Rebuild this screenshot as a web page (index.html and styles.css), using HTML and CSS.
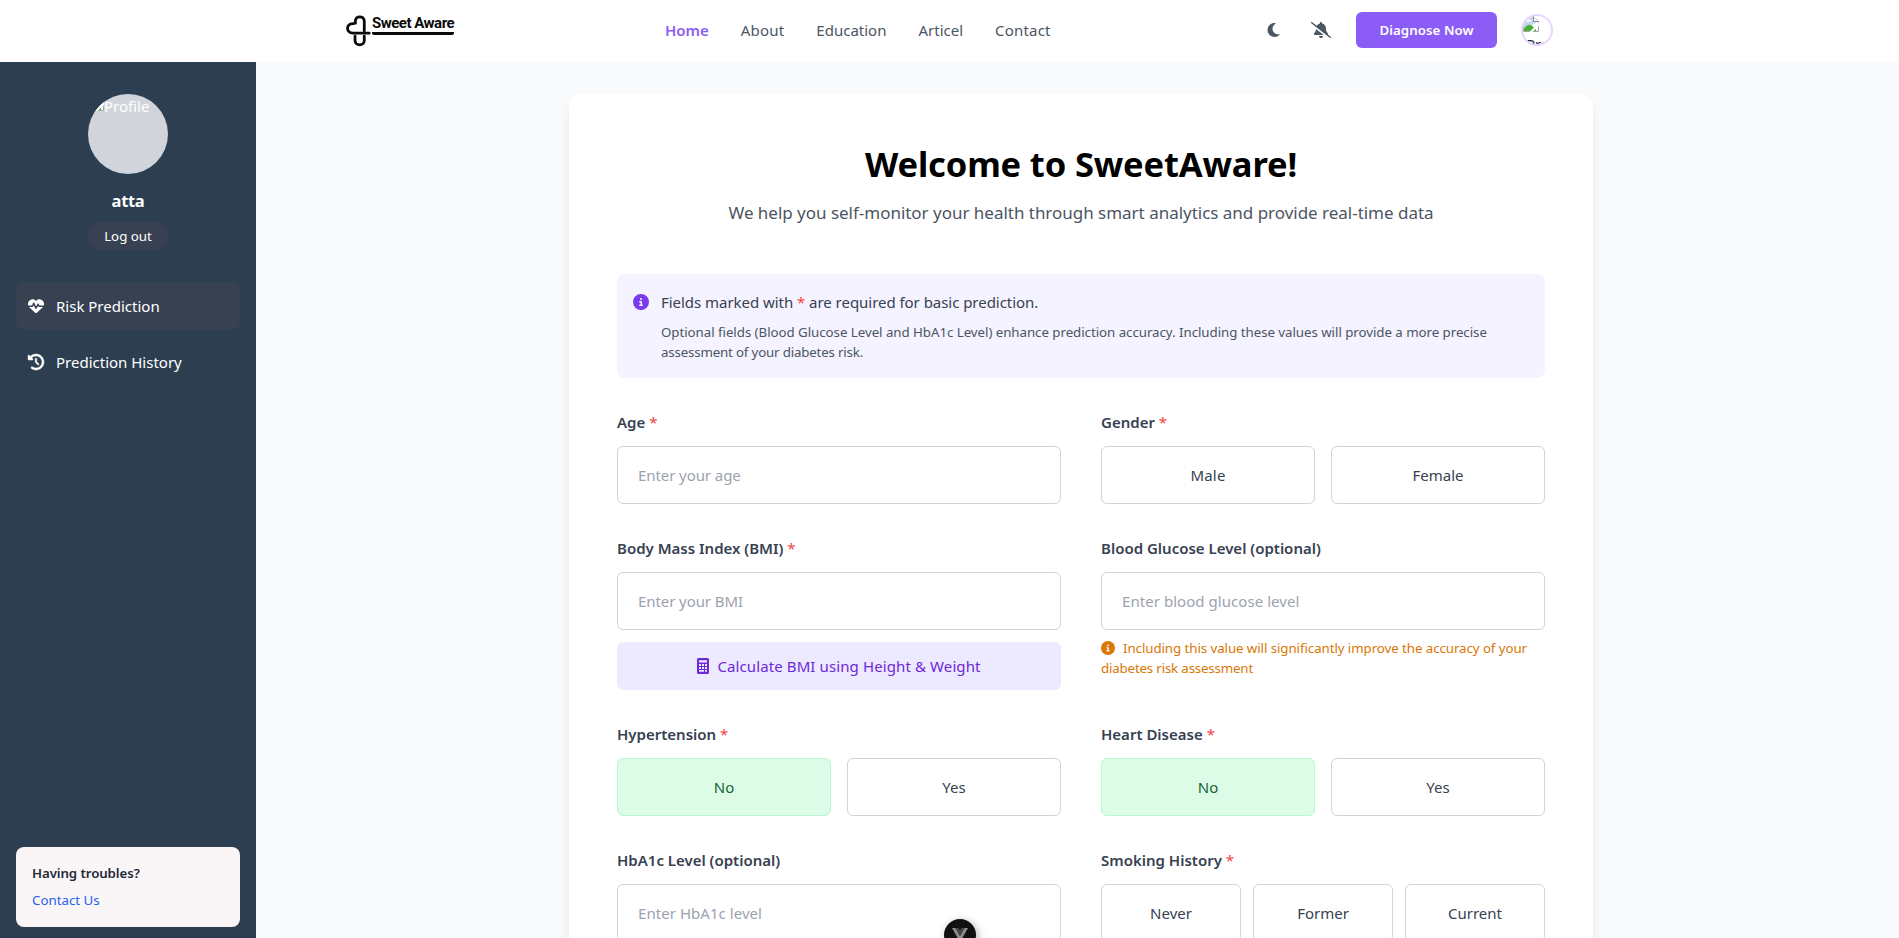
FILE: index.html
```html
<!DOCTYPE html>
<html lang="en">
<head>
<meta charset="utf-8">
<title>Sweet Aware</title>
<link rel="stylesheet" href="styles.css">
</head>
<body>
<svg class="defs" aria-hidden="true">
  <symbol id="info" viewBox="0 0 512 512"><path d="M256 512A256 256 0 1 0 256 0a256 256 0 1 0 0 512zM216 336h24V272H216c-13.3 0-24-10.7-24-24s10.7-24 24-24h48c13.3 0 24 10.7 24 24v88h8c13.3 0 24 10.7 24 24s-10.7 24-24 24H216c-13.3 0-24-10.7-24-24s10.7-24 24-24zm40-208a32 32 0 1 1 0 64 32 32 0 1 1 0-64z"/></symbol>
  <symbol id="broken" viewBox="0 0 16 16">
    <path d="M.5.5h10l5 5v10H.5z" fill="#fff" stroke="#a3a3a3"/>
    <path d="M1 1h9.5v4.500h4.500L1 14z" fill="#c2d5f2"/>
    <path d="M3 5.500q0-1.500 1.500-1.500 1-1.500 2.500 0 1.500 0 1.500 1.500z" fill="#fff"/>
    <path d="M1 15v-2.500Q5 7 8.500 9.500L13 13v2z" fill="#4caf3a"/>
    <path d="M16 6.500 6.500 16h3L16 10z" fill="#fff"/>
    <path d="M10.500.5v5h5" fill="#fff" stroke="#8b8b8b"/>
  </symbol>
</svg>

<header class="navbar">
  <div class="logo">
    <svg class="logo-mark" viewBox="43 40 81 100" width="27" height="33" fill="none" stroke="#0a0a0a" stroke-width="8.500" stroke-linecap="round">
      <path d="M116 98H66c-20-1-22-28 0-29 4 0 7 0 8 2V62c0-18 27-18 27 0v29"/>
      <path d="M73 107v13c0 18 28 18 28 0v-13"/>
    </svg>
    <span class="logo-name">Sweet Aware</span>
  </div>
  <nav class="links">
    <a class="link link-active">Home</a>
    <a class="link about">About</a>
    <a class="link">Education</a>
    <a class="link">Articel</a>
    <a class="link contact">Contact</a>
  </nav>
  <div class="actions">
    <svg class="moon" viewBox="0 0 384 512" width="13" height="16"><path d="M223.500 32C100 32 0 132.300 0 256S100 480 223.500 480c60.600 0 115.500-24.200 155.800-63.400c5-4.900 6.300-12.500 3.100-18.700s-10.100-9.700-17-8.500c-9.800 1.700-19.800 2.600-30.100 2.600c-96.900 0-175.500-78.800-175.500-176c0-65.800 36-123.100 89.300-153.300c6.100-3.500 9.200-10.500 7.700-17.300s-7.300-11.900-14.300-12.500c-6.300-.5-12.600-.8-19-.8z"/></svg>
    <svg class="bell" viewBox="0 0 640 512" width="20" height="16"><path d="M38.800 5.100C28.400-3.100 13.300-1.200 5.100 9.200S-1.200 34.700 9.200 42.900l592 464c10.400 8.200 25.500 6.300 33.700-4.100s6.300-25.500-4.100-33.700l-90.200-70.700c.2-.4 .4-.9 .6-1.300c5.200-11.500 3.100-25-5.300-34.400l-7.400-8.300C497.300 319.200 480 273.900 480 226.800V208c0-77.400-55-142-128-156.800V32c0-17.700-14.300-32-32-32s-32 14.300-32 32V51.200c-42.600 8.600-79 34.200-102 69.300L38.800 5.100zM406.200 416L160 222.100v4.800c0 47-17.300 92.400-48.500 127.600l-7.400 8.300c-8.400 9.400-10.400 22.900-5.300 34.400S115.400 416 128 416H406.200zm-40.900 77.300c12-12 18.700-28.300 18.700-45.300H320 256c0 17 6.700 33.300 18.700 45.300s28.300 18.700 45.300 18.700s33.300-6.700 45.300-18.700z"/></svg>
    <a class="diagnose">Diagnose Now</a>
    <div class="avatar"><svg width="16" height="16"><use href="#broken"/></svg><span class="avatar-alt">Profile</span></div>
  </div>
</header>

<div class="layout">
  <aside class="sidebar">
    <div class="photo"><svg class="photo-icon" width="16" height="16"><use href="#broken"/></svg><span>Profile</span></div>
    <div class="user">atta</div>
    <a class="logout">Log out</a>
    <nav class="menu">
      <a class="item item-active"><svg viewBox="0 0 512 512" width="16" height="16"><path d="M228.300 469.100L47.600 300.400c-4.200-3.900-8.200-8.100-11.900-12.400h87c22.600 0 43-13.600 51.700-34.500l10.500-25.200 49.300 109.500c3.800 8.500 12.100 14 21.400 14.100s17.800-5 22-13.300L320 253.700l1.700 3.400c9.500 19 28.900 31 50.100 31H476.300c-3.700 4.300-7.700 8.500-11.900 12.400L283.700 469.100c-7.500 7-17.400 10.900-27.700 10.900s-20.200-3.900-27.700-10.900zM503.700 240h-132c-3 0-5.800-1.700-7.200-4.400l-23.200-46.300c-4.100-8.100-12.400-13.300-21.500-13.300s-17.400 5.100-21.500 13.300l-41.400 82.800L205.900 158.200c-3.900-8.700-12.700-14.300-22.200-14.100s-18.100 5.900-21.800 14.800l-31.800 76.300c-1.200 3-4.200 4.900-7.400 4.900H16c-2.600 0-5 .4-7.300 1.100C3 225.200 0 208.200 0 190.900v-5.800c0-69.900 50.500-129.500 119.400-141C165 36.500 211.400 51.400 244 84l12 12 12-12c32.600-32.600 79-47.500 124.600-39.900C461.500 55.600 512 115.200 512 185.100v5.800c0 16.900-2.800 33.500-8.300 49.100z"/></svg>Risk Prediction</a>
      <a class="item"><svg class="history" viewBox="0 0 512 512" width="16" height="16"><path d="M75 75L41 41C25.900 25.900 0 36.600 0 57.900V168c0 13.300 10.700 24 24 24H134.100c21.400 0 32.100-25.900 17-41l-30.800-30.800C155 85.500 203 64 256 64c106 0 192 86 192 192s-86 192-192 192c-40.800 0-78.600-12.700-109.700-34.400c-14.500-10.100-34.400-6.600-44.600 7.900s-6.600 34.400 7.900 44.600C151.200 495 201.700 512 256 512c141.400 0 256-114.600 256-256S397.400 0 256 0C185.300 0 121.300 28.700 75 75zm181 53c-13.300 0-24 10.700-24 24V256c0 6.400 2.500 12.500 7 17l72 72c9.400 9.400 24.600 9.400 33.900 0s9.400-24.600 0-33.900l-65-65V152c0-13.300-10.700-24-24-24z"/></svg>Prediction History</a>
    </nav>
    <div class="help">
      <div class="help-title">Having troubles?</div>
      <a class="help-link">Contact Us</a>
    </div>
  </aside>

  <main class="main">
    <section class="card">
      <h1 class="title">Welcome to SweetAware!</h1>
      <p class="subtitle">We help you self-monitor your health through smart analytics and provide real-time data</p>

      <div class="notice">
        <svg class="notice-icon" width="16" height="16"><use href="#info"/></svg>
        <div>
          <p class="notice-lead">Fields marked with <span class="req">*</span> are required for basic prediction.</p>
          <p class="notice-text">Optional fields (Blood Glucose Level and HbA1c Level) enhance prediction accuracy. Including these values will provide a more precise<br><span class="tight">assessment of your diabetes risk.</span></p>
        </div>
      </div>

      <form class="form">
        <div class="field">
          <label class="label">Age <span class="req">*</span></label>
          <input class="input" placeholder="Enter your age">
        </div>
        <div class="field">
          <label class="label">Gender <span class="req">*</span></label>
          <div class="options"><button type="button" class="option male">Male</button><button type="button" class="option">Female</button></div>
        </div>
        <div class="field">
          <label class="label">Body Mass Index (BMI) <span class="req">*</span></label>
          <input class="input" placeholder="Enter your BMI">
          <button type="button" class="calc">
            <svg width="12" height="16" viewBox="0 0 12 16"><path fill-rule="evenodd" d="M1.500 0h9A1.500 1.500 0 0 1 12 1.500v13a1.500 1.500 0 0 1-1.500 1.500h-9A1.500 1.500 0 0 1 0 14.500v-13A1.500 1.500 0 0 1 1.500 0zM2 2.200v2.300h8V2.200zM2 6v2h2V6zM5 6v2h2V6zM8 6v2h2V6zM2 9v2h2V9zM5 9v2h2V9zM8 9v2h2V9zM2 12v1.800h5V12zM8 12v1.800h2V12z"/></svg>
            Calculate BMI using Height &amp; Weight
          </button>
        </div>
        <div class="field">
          <label class="label">Blood Glucose Level (optional)</label>
          <input class="input wide" placeholder="Enter blood glucose level">
          <p class="hint"><svg class="hint-icon" width="14" height="14"><use href="#info"/></svg>Including this value will significantly improve the accuracy of your<br><span class="tight">diabetes risk assessment</span></p>
        </div>
        <div class="field">
          <label class="label">Hypertension <span class="req">*</span></label>
          <div class="options"><button type="button" class="option option-on">No</button><button type="button" class="option">Yes</button></div>
        </div>
        <div class="field">
          <label class="label">Heart Disease <span class="req">*</span></label>
          <div class="options"><button type="button" class="option option-on">No</button><button type="button" class="option">Yes</button></div>
        </div>
        <div class="field">
          <label class="label">HbA1c Level (optional)</label>
          <input class="input wide" placeholder="Enter HbA1c level">
        </div>
        <div class="field">
          <label class="label">Smoking History <span class="req">*</span></label>
          <div class="options options-3"><button type="button" class="option">Never</button><button type="button" class="option">Former</button><button type="button" class="option">Current</button></div>
        </div>
      </form>
    </section>
  </main>
</div>

<div class="devtools">
  <svg width="16" height="14" viewBox="0 0 16 14"><path d="M0 0h3.500L8 8l4.500-8H16L8 14z" fill="#8d8d8d"/><path d="M3.500 0h3L8 2.600 9.500 0h3L8 8z" fill="#484848"/></svg>
</div>
</body>
</html>
```

FILE: styles.css
```css
* { box-sizing: border-box; margin: 0; padding: 0; }

body {
  height: 938px;
  overflow: hidden;
  display: flex;
  flex-direction: column;
  background: #f9fafc;
  color: #000;
  font: 15px/24px "Noto Sans", "Open Sans", sans-serif;
  letter-spacing: 0;
}

svg { display: block; flex: none; fill: currentColor; }
.defs { position: absolute; width: 0; height: 0; }
button, input { font: inherit; letter-spacing: inherit; }

/* Top bar */
.navbar {
  flex: none;
  height: 62px;
  padding: 0 346px 2px 345px;
  display: flex;
  align-items: center;
  background: #fff;
}

.logo { width: 320px; display: flex; align-items: flex-start; }
.logo-mark { fill: none; }
.logo-name {
  margin-top: 1px;
  border-bottom: 3px solid #0a0a0a;
  border-radius: 0 0 2px 2px;
  color: #0a0a0a;
  font: 700 15px/17px Roboto, sans-serif;
  letter-spacing: -0.5px;
}

.links { display: flex; gap: 32px; color: #4b5563; }
.link-active { color: #8b5cf6; font-weight: 600; }
.about, .contact { letter-spacing: 0.2px; }

.actions { margin-left: auto; display: flex; align-items: center; color: #4b5563; }
.moon { margin-right: 31px; }
.bell { margin-right: 25px; }
.diagnose {
  width: 141px;
  height: 36px;
  margin-right: 24px;
  border-radius: 6px;
  background: #8b5cf6;
  color: #fff;
  font-size: 13.3px;
  font-weight: 600;
  line-height: 36px;
  text-align: center;
  letter-spacing: 0.05px;
}
.avatar {
  width: 32px;
  height: 32px;
  border: 2px solid #e9d5ff;
  border-radius: 50%;
  overflow: hidden;
}
.avatar-alt { display: block; margin-left: 3px; color: #1f2937; }

/* Sidebar */
.layout { flex: 1; min-height: 0; display: flex; }
.sidebar {
  flex: none;
  width: 256px;
  padding: 32px 16px 11px;
  display: flex;
  flex-direction: column;
  align-items: center;
  background: #2d3e50;
  color: #fff;
}
.photo {
  width: 80px;
  height: 80px;
  display: flex;
  border-radius: 50%;
  background: #d1d5db;
  overflow: hidden;
}
.photo-icon { margin-top: 1px; }
.user { margin-top: 13px; font-size: 16.500px; font-weight: 700; line-height: 28px; letter-spacing: -0.3px; }
.logout {
  width: 80px;
  margin-top: 7px;
  border-radius: 14px;
  background: #384151;
  font-size: 13.3px;
  line-height: 28px;
  text-align: center;
}
.menu { align-self: stretch; margin-top: 32px; display: flex; flex-direction: column; gap: 8px; }
.item {
  height: 48px;
  padding: 0 12px;
  display: flex;
  align-items: center;
  gap: 12px;
  border-radius: 8px;
}
.item-active { background: #384151; }
.history { stroke: currentColor; stroke-width: 16px; overflow: visible; }
.help {
  align-self: stretch;
  height: 80px;
  margin-top: auto;
  padding: 16px;
  border-radius: 8px;
  background: #faf6f8;
  font-size: 13.3px;
  line-height: 20px;
}
.help-title { margin-bottom: 7px; color: #1f2937; font-weight: 600; letter-spacing: -0.1px; }
.help-link { display: block; color: #2563eb; }

/* Content */
.main { flex: 1; padding: 32px 0 0 7px; display: flex; justify-content: center; align-items: flex-start; }
.card {
  width: 1024px;
  height: 844px;
  padding: 48px;
  border-radius: 12px 12px 0 0;
  background: #fff;
  box-shadow: 0 10px 15px -3px rgba(0, 0, 0, .1), 0 4px 6px -4px rgba(0, 0, 0, .1);
}
.title { padding-top: 2px; font-size: 34.500px; font-weight: 700; line-height: 40px; text-align: center; letter-spacing: -0.16px; }
.subtitle { margin-top: 15px; color: #4b5563; font-size: 17px; line-height: 28px; text-align: center; letter-spacing: -0.02px; }

.notice {
  height: 104px;
  margin-top: 47px;
  padding: 16px;
  display: flex;
  gap: 12px;
  border-radius: 8px;
  background: #f5f3ff;
}
.notice-icon { margin-top: 4px; color: #7c3aed; }
.notice-lead { color: #374151; letter-spacing: -0.04px; }
.notice-text { margin-top: 8px; color: #4b5563; font-size: 13.3px; line-height: 20px; letter-spacing: -0.045px; white-space: nowrap; }
.tight { letter-spacing: -0.17px; }
.req { color: #ef4444; font-weight: 400; }

.form { margin-top: 32px; display: grid; grid-template-columns: 1fr 1fr; gap: 32px 40px; }
.field { display: flex; flex-direction: column; }
.label { margin-bottom: 12px; color: #374151; font-weight: 600; }
.input {
  width: 100%;
  height: 58px;
  padding: 0 20px;
  border: 1px solid #d1d3db;
  border-radius: 6px;
  background: #fff;
  letter-spacing: -0.08px;
}
.input::placeholder { color: #9ca3af; }
.wide { letter-spacing: 0.05px; }
.options { display: grid; grid-template-columns: 1fr 1fr; gap: 16px; }
.options-3 { grid-template-columns: repeat(3, 1fr); gap: 12px; }
.option {
  height: 58px;
  border: 1px solid #d1d3db;
  border-radius: 6px;
  background: #fff;
  color: #374151;
}
.male { letter-spacing: 0.2px; }
.option-on { border-color: #bbf7d0; background: #dcfce7; color: #166534; }
.calc {
  height: 48px;
  margin-top: 12px;
  display: flex;
  align-items: center;
  justify-content: center;
  gap: 8px;
  border: 0;
  border-radius: 6px;
  background: #ede9fe;
  color: #6d28d9;
  letter-spacing: 0.11px;
}
.hint { margin-top: 8px; color: #d97706; font-size: 13.3px; line-height: 20px; letter-spacing: -0.07px; white-space: nowrap; }
.hint-icon { display: inline-block; margin-right: 8px; vertical-align: -2px; }

/* Floating devtools toggle, partly below the fold */
.devtools {
  position: absolute;
  left: 944px;
  top: 919px;
  width: 32px;
  height: 32px;
  padding-top: 9px;
  display: flex;
  justify-content: center;
  border-radius: 50%;
  background: #111;
  box-shadow: 2px 2px 8px rgba(0, 0, 0, .3);
}
```
